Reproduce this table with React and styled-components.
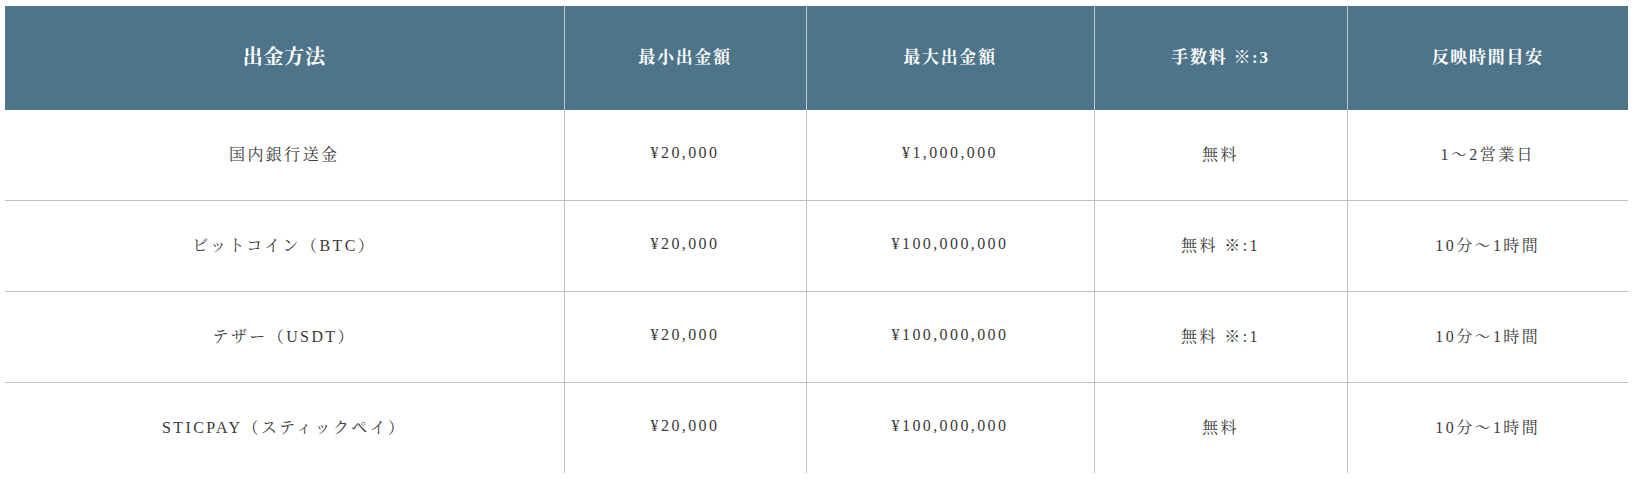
import React from 'react';
import styled, { createGlobalStyle } from 'styled-components';

const GlobalStyle = createGlobalStyle`
  body {
    margin: 0;
    background: #fff;
    font-family: "Liberation Serif", "Noto Serif CJK JP", "Noto Sans CJK JP", serif;
  }
`;

const Wrapper = styled.div`
  padding: 6px 0 0 5px;
`;

const Table = styled.table`
  width: 1623px;
  border-collapse: collapse;
  table-layout: fixed;
`;

const HeadCell = styled.th`
  height: 99px;
  padding: 0 0 5px;
  background: #4e7489;
  color: #fff;
  font-weight: bold;
  font-size: ${p => (p.$lead ? '20px' : '17px')};
  letter-spacing: ${p => (p.$lead ? '0.04em' : '0.1em')};
  text-align: center;
  vertical-align: middle;
  border-left: ${p => (p.$lead ? 'none' : '1px solid #c4c4c4')};
`;

const Row = styled.tr`
  border-bottom: ${p => (p.$last ? 'none' : '1px solid #c0c0c0')};
`;

const Cell = styled.td`
  height: 86px;
  padding: 0 0 4px;
  color: #3a3a3a;
  font-size: 16px;
  letter-spacing: 0.15em;
  text-align: center;
  vertical-align: middle;
  border-left: ${p => (p.$lead ? 'none' : '1px solid #c0c0c0')};
`;

const widths = [559, 242, 288, 253, 281];

const headers = ['出金方法', '最小出金額', '最大出金額', '手数料 ※:3', '反映時間目安'];

const rows = [
  ['国内銀行送金', '¥20,000', '¥1,000,000', '無料', '1〜2営業日'],
  ['ビットコイン（BTC）', '¥20,000', '¥100,000,000', '無料 ※:1', '10分〜1時間'],
  ['テザー（USDT）', '¥20,000', '¥100,000,000', '無料 ※:1', '10分〜1時間'],
  ['STICPAY（スティックペイ）', '¥20,000', '¥100,000,000', '無料', '10分〜1時間'],
];

export default function App() {
  return (
    <Wrapper>
      <GlobalStyle />
      <Table>
        <colgroup>
          {widths.map((w, i) => (
            <col key={i} style={{ width: w }} />
          ))}
        </colgroup>
        <thead>
          <tr>
            {headers.map((h, i) => (
              <HeadCell key={h} $lead={i === 0}>{h}</HeadCell>
            ))}
          </tr>
        </thead>
        <tbody>
          {rows.map((r, ri) => (
            <Row key={ri} $last={ri === rows.length - 1}>
              {r.map((c, ci) => (
                <Cell key={ci} $lead={ci === 0}>{c}</Cell>
              ))}
            </Row>
          ))}
        </tbody>
      </Table>
    </Wrapper>
  );
}
